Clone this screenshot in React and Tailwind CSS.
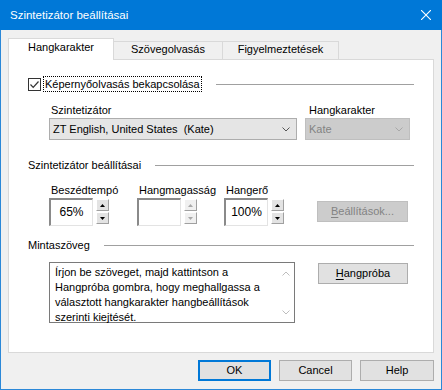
import React from 'react';

// small chevron used in the combo boxes and the text area scrollbar
const Chevron = ({ up, color }) => (
    <svg width="8" height="5" viewBox="0 0 8 5" fill="none">
        <path d={up ? 'M0.5 4.5 L4 1 L7.5 4.5' : 'M0.5 0.5 L4 4 L7.5 0.5'} stroke={color} strokeWidth="1" />
    </svg>
);

const SpinBtn = ({ up, disabled }) => (
    <div className={`w-[13px] h-[12px] flex items-center justify-center border-t border-l border-white border-r border-b border-r-[#a0a0a0] border-b-[#a0a0a0] ${disabled ? 'bg-[#f0f0f0]' : 'bg-[#e3e3e3]'}`}>
        <svg width="5" height="3" viewBox="0 0 5 3">
            <path d={up ? 'M0 3 L2.5 0 L5 3 Z' : 'M0 0 L2.5 3 L5 0 Z'} fill={disabled ? '#a8a8a8' : '#000'} />
        </svg>
    </div>
);

const Spinner = ({ label, value, disabled, className = '' }) => (
    <div className={`flex flex-col ${className}`}>
        <span className="pl-[2px]">{label}</span>
        <div className="flex items-start gap-[3px] mt-[1px]">
            <div className="w-[44px] h-[28px] bg-white border-t-2 border-l-2 border-[#8a8a8a] border-r border-b border-r-[#e3e3e3] border-b-[#e3e3e3] flex items-center justify-center text-[12px]">
                {value}
            </div>
            <div className="flex flex-col gap-[1px] pt-[1px]">
                <SpinBtn up disabled={disabled} />
                <SpinBtn disabled={disabled} />
            </div>
        </div>
    </div>
);

const GroupHeader = ({ label, className = '' }) => (
    <div className={`flex items-center h-[13px] ${className}`}>
        <span className="whitespace-nowrap">{label}</span>
        <div className="flex-1 ml-[14px] h-px bg-[#a0a0a0]" />
    </div>
);

export default function App() {
    return (
        <div className="w-[442px] h-[390px] flex flex-col bg-[#f0f0f0] border-x border-b border-[#2b88d8] font-['Liberation_Sans',Arial,sans-serif] text-[11px] leading-[13px] text-black">
            {/* Title bar */}
            <div className="-mx-px h-[30px] bg-[#0078d7] flex items-center justify-between pl-[10px] pr-[11px] text-white text-[11.5px]">
                <span>Szintetizátor beállításai</span>
                <svg width="10" height="10" viewBox="0 0 10 10">
                    <path d="M0 0 L10 10 M10 0 L0 10" stroke="#fff" strokeWidth="1.1" />
                </svg>
            </div>

            <div className="flex-1 flex flex-col px-[7px] pt-[8px]">
                {/* Tabs */}
                <div className="flex items-end h-[22px] relative z-10 -mb-px">
                    <div className="w-[106px] h-[22px] bg-white border-x border-t border-[#d9d9d9] flex justify-center pt-[2px]">
                        Hangkarakter
                    </div>
                    <div className="w-[109px] h-[19px] border-t border-r border-b border-[#d9d9d9] flex justify-center pt-[1px]">
                        Szövegolvasás
                    </div>
                    <div className="w-[116px] h-[19px] border-t border-r border-b border-[#d9d9d9] flex justify-center pt-[1px]">
                        Figyelmeztetések
                    </div>
                </div>

                {/* Tab panel */}
                <div className="h-[294px] bg-white border border-[#d9d9d9] flex flex-col px-[19px]">
                    <div className="mt-[16px] h-[16px] flex items-center">
                        <div className="w-[13px] h-[13px] border border-[#333] bg-white flex items-center justify-center">
                            <svg width="11" height="11" viewBox="0 0 11 11" fill="none">
                                <path d="M1.5 5.5 L4.2 8.3 L9.5 2.5" stroke="#333" strokeWidth="1.2" />
                            </svg>
                        </div>
                        <span className="ml-[2px] h-[16px] px-px border border-dotted border-black leading-[14px] whitespace-nowrap">
                            Képernyőolvasás bekapcsolása
                        </span>
                        <div className="flex-1 ml-[14px] h-px bg-[#a0a0a0]" />
                    </div>

                    <div className="mt-[12px] pl-[21px] flex gap-[8px]">
                        <div className="w-[248px] flex flex-col">
                            <span className="pl-[2px]">Szintetizátor</span>
                            <div className="mt-[1px] h-[22px] bg-[#e5e5e5] border border-[#adadad] flex items-center justify-between pl-[3px] pr-[6px]">
                                <span className="whitespace-pre">ZT English, United States  (Kate)</span>
                                <Chevron color="#555" />
                            </div>
                        </div>
                        <div className="w-[105px] flex flex-col">
                            <span className="pl-[4px]">Hangkarakter</span>
                            <div className="mt-[1px] h-[22px] bg-[#cccccc] border border-[#bfbfbf] flex items-center justify-between pl-[3px] pr-[6px] text-[#838383]">
                                <span>Kate</span>
                                <Chevron color="#a8a8a8" />
                            </div>
                        </div>
                    </div>

                    <GroupHeader label="Szintetizátor beállításai" className="mt-[19px]" />

                    <div className="mt-[12px] pl-[21px] flex items-start">
                        <Spinner label="Beszédtempó" value="65%" className="w-[88px]" />
                        <Spinner label="Hangmagasság" value="" disabled className="w-[87px]" />
                        <Spinner label="Hangerő" value="100%" className="w-[93px]" />
                        <div className="mt-[17px] w-[91px] h-[21px] bg-[#cccccc] border border-[#bfbfbf] flex items-center justify-center text-[#838383]">
                            <span><span className="underline underline-offset-2">B</span>eállítások...</span>
                        </div>
                    </div>

                    <GroupHeader label="Mintaszöveg" className="mt-[13px]" />

                    <div className="mt-[10px] pl-[21px] flex items-start">
                        <div className="w-[246px] h-[61px] border border-[#7a7a7a] bg-white flex">
                            <div className="flex-1 pl-[5px] pt-[2px] leading-[15px] whitespace-nowrap">
                                Írjon be szöveget, majd kattintson a<br />
                                Hangpróba gombra, hogy meghallgassa a<br />
                                választott hangkarakter hangbeállítások<br />
                                szerinti kiejtését.
                            </div>
                            <div className="w-[17px] flex flex-col items-center justify-between pt-[8px] pb-[7px]">
                                <Chevron up color="#bdbdbd" />
                                <Chevron color="#bdbdbd" />
                            </div>
                        </div>
                        <div className="ml-[23px] mt-[1px] w-[90px] h-[21px] bg-[#e1e1e1] border border-[#adadad] flex items-center justify-center">
                            <span><span className="underline underline-offset-2">H</span>angpróba</span>
                        </div>
                    </div>
                </div>

                {/* Dialog buttons */}
                <div className="mt-[7px] flex justify-end gap-[8px]">
                    <div className="w-[73px] h-[21px] bg-[#e1e1e1] border-2 border-[#0078d7] flex items-center justify-center">OK</div>
                    <div className="w-[73px] h-[21px] bg-[#e1e1e1] border border-[#adadad] flex items-center justify-center">Cancel</div>
                    <div className="w-[74px] h-[21px] bg-[#e1e1e1] border border-[#adadad] flex items-center justify-center">Help</div>
                </div>
            </div>
        </div>
    );
}
